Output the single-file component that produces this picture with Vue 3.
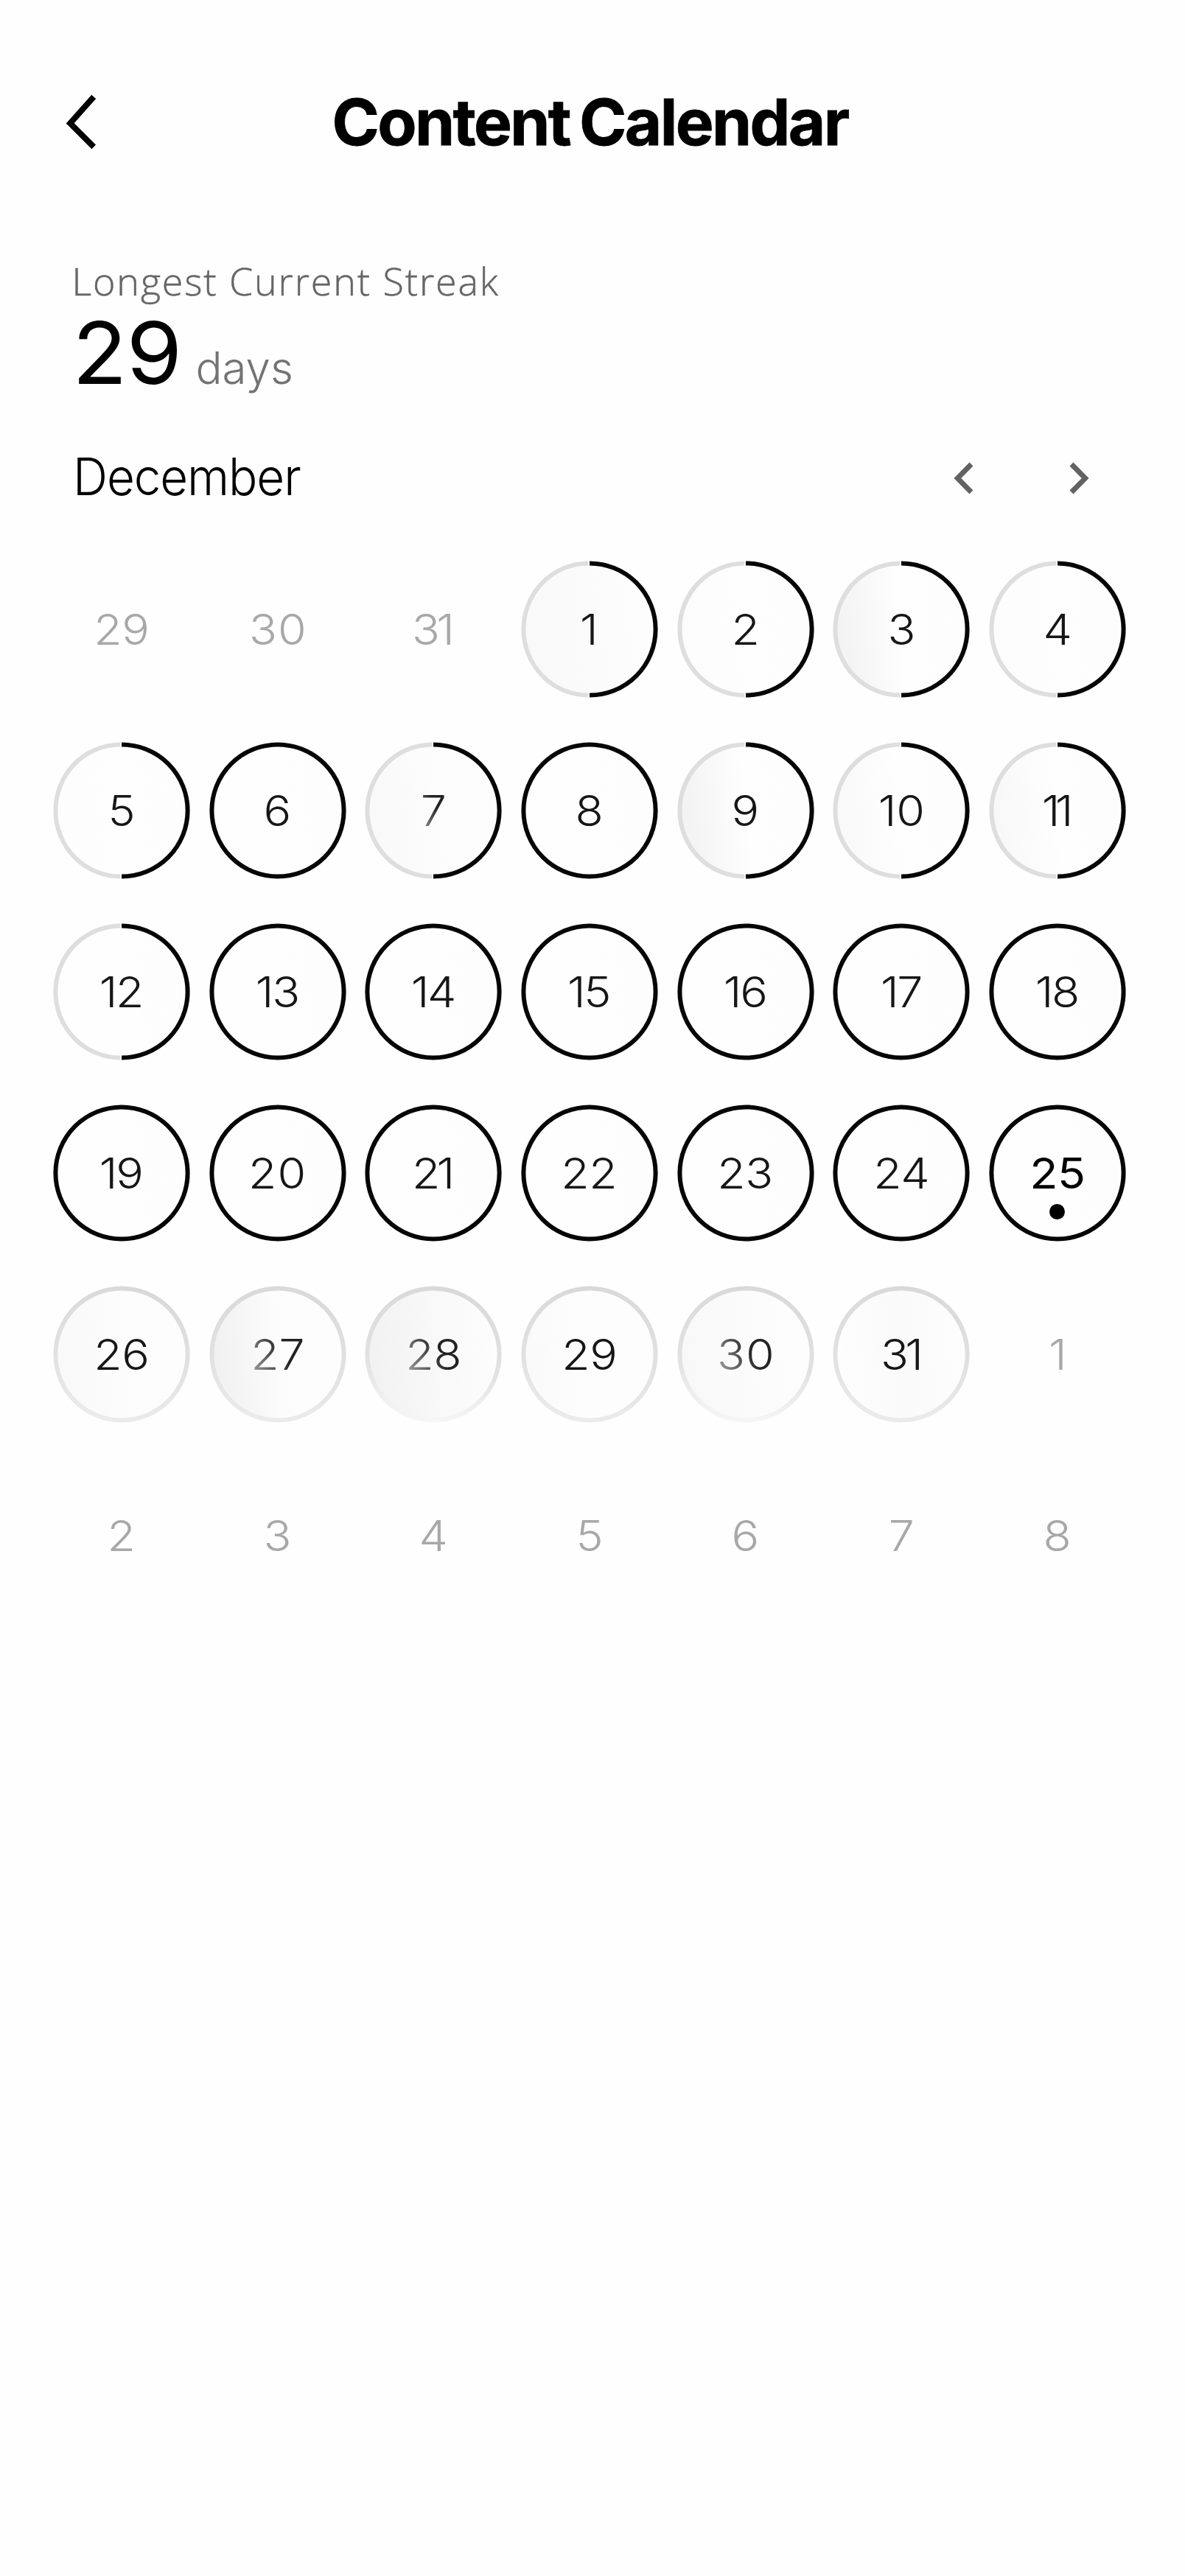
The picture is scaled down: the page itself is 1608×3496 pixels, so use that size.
<script setup>
// Tracking for two-digit labels; the numeral 1 is set tighter than the rest.
const tracking = (n) => {
  const s = String(n)
  if (s.length < 2) return 0
  if (s === '11') return -6
  if (s[1] === '1') return -4.5
  if (s === '10') return 0
  if (s[0] === '1') return -2.2
  return s[1] === '0' ? 1 : -0.3
}

// Tint at the left edge and in the middle of each disc.
const tints = {
  1: ['#f9f9f9', '#fbfbfb'],
  2: ['#fcfcfc', '#fefefe'],
  3: ['#f3f3f3', '#fefefe'],
  4: ['#fcfcfc', '#fefefe'],
  5: ['#fdfdfd', '#fefefe'],
  7: ['#f9f9f9', '#fcfcfc'],
  9: ['#f3f3f3', '#fefefe'],
  10: ['#f9f9f9', '#fefefe'],
  11: ['#f8f8f8', '#fefefe'],
  26: ['#f9f9f9', '#fcfcfc'],
  27: ['#f1f1f1', '#fcfcfc'],
  28: ['#f2f2f2', '#f8f8f8'],
  29: ['#fafafa', '#fdfdfd'],
  30: ['#f8f8f8', '#fbfbfb'],
  31: ['#fdfdfd', '#fafafa'],
}

const half = [1, 2, 3, 4, 5, 7, 9, 10, 11, 12]
const faded = [7, 27, 28, 30]

const days = []
const add = (n, state) =>
  days.push({
    id: state + n,
    n,
    state,
    tint: tints[n] || ['#fefefe', '#fefefe'],
    gap: tracking(n),
    faded: state !== 'out' && faded.includes(n),
    today: state !== 'out' && n === 25,
  })

for (const n of [29, 30, 31]) add(n, 'out')
for (let n = 1; n <= 31; n++) {
  add(n, n > 25 ? 'empty' : half.includes(n) ? 'half' : 'full')
}
for (let n = 1; n <= 8; n++) add(n, 'out')
</script>

<template>
  <main class="screen">
    <header class="header">
      <svg class="back" viewBox="0 0 50 80" width="50" height="80">
        <path d="M40.2 6.3 8.2 42.3 40.2 74.3" />
      </svg>
      <h1>Content Calendar</h1>
    </header>

    <section class="streak">
      <p class="label">Longest Current Streak</p>
      <p class="value"><b>29</b><span>days</span></p>
    </section>

    <section class="month">
      <h2>December</h2>
      <nav>
        <svg viewBox="0 0 40 50" width="40" height="50"><path d="M29 6 10.3 25 29 44" /></svg>
        <svg viewBox="0 0 40 50" width="40" height="50"><path d="M11 6 29.7 25 11 44" /></svg>
      </nav>
    </section>

    <section class="grid">
      <div v-for="d in days" :key="d.id" class="day" :class="[d.state, { today: d.today, faded: d.faded }]">
        <svg v-if="d.state !== 'out'" class="ring" viewBox="0 0 186 186" width="186" height="186">
          <defs>
            <linearGradient :id="'t' + d.n" x1="0" y1="0.55" x2="1" y2="0.45">
              <stop offset="0.05" :stop-color="d.tint[0]" />
              <stop offset="0.5" :stop-color="d.tint[1]" />
              <stop offset="1" stop-color="#fdfdfd" />
            </linearGradient>
            <linearGradient :id="'r' + d.n" x1="0.55" y1="0" x2="0.45" y2="1">
              <stop offset="0" stop-color="#d9d9d9" />
              <stop offset="0.6" stop-color="#e2e2e2" />
              <stop offset="1" :stop-color="d.n === 28 || d.n === 30 ? '#f6f6f6' : '#ebebeb'" />
            </linearGradient>
          </defs>
          <circle cx="93" cy="93" r="89.6" :fill="`url(#t${d.n})`" />
          <circle v-if="d.state === 'full'" class="dark" cx="93" cy="93" r="89.6" />
          <circle v-if="d.state === 'empty'" class="light" cx="93" cy="93" r="89.6" :stroke="`url(#r${d.n})`" />
          <template v-if="d.state === 'half'">
            <path class="light" d="M91.5 3.4A88.1 89.6 0 0 0 91.5 182.6" stroke="#dedede" />
            <path class="dark" d="M93 3.4A89.6 89.6 0 0 1 93 182.6" />
          </template>
        </svg>
        <span class="num" :style="{ letterSpacing: d.gap + 'px', marginRight: -d.gap + 'px' }">{{ d.n }}</span>
        <i v-if="d.today" class="dot"></i>
      </div>
    </section>
  </main>
</template>

<style>
body {
  background: #fefefe;
}
</style>

<style scoped>
.screen {
  box-sizing: border-box;
  width: 1608px;
  height: 3496px;
  padding-top: 104px;
  background: #fefefe;
  font-family: Inter, "Liberation Sans", sans-serif;
  color: #000;
  overflow: hidden;
}
h1,
h2,
p {
  margin: 0;
  font-weight: inherit;
}
svg {
  display: block;
  fill: none;
}
.header {
  display: grid;
  grid-template-columns: 140px 1fr 147px;
  align-items: center;
  height: 124px;
}
.back {
  margin-left: 87px;
  margin-top: -3px;
}
.back path {
  stroke: #000;
  stroke-width: 8;
}
h1 {
  font-size: 87px;
  line-height: 124px;
  font-weight: 700;
  letter-spacing: -2.6px;
  word-spacing: -5px;
  text-align: center;
  white-space: nowrap;
  -webkit-text-stroke: 0.8px #000;
}
.streak {
  padding: 121px 0 0 97.5px;
}
.label {
  font-family: "Open Sans", "Noto Sans", sans-serif;
  font-weight: 300;
  font-size: 52px;
  line-height: 64px;
  letter-spacing: 1.86px;
  color: #666;
  -webkit-text-stroke: 0.5px #666;
}
.value {
  display: flex;
  align-items: baseline;
  gap: 26px;
  height: 132px;
  line-height: 132px;
}
.value b {
  font-weight: 400;
  font-size: 117px;
  letter-spacing: -1px;
  transform: scaleX(1.045);
  transform-origin: left;
}
.value span {
  font-weight: 300;
  font-size: 60px;
  color: #737373;
}
.month {
  display: flex;
  align-items: center;
  justify-content: space-between;
  height: 100px;
  margin-top: 51.5px;
  padding: 0 125px 0 98.5px;
}
h2 {
  font-size: 70px;
  font-weight: 300;
  line-height: 100px;
  letter-spacing: -1.2px;
  transform: scaleX(0.935);
  transform-origin: left;
}
nav {
  display: flex;
  gap: 114px;
  margin-top: 5px;
}
nav path {
  stroke: #636363;
  stroke-width: 7;
}
.grid {
  display: grid;
  grid-template-columns: repeat(7, 211.7px);
  grid-auto-rows: 246.1px;
  margin: 34px 0 0 59px;
}
.day {
  display: grid;
  place-items: center;
  position: relative;
}
.ring,
.num {
  grid-area: 1 / 1;
}
.ring circle,
.ring path {
  stroke-width: 6;
}
.dark {
  stroke: #060606;
}
.num {
  font-size: 58px;
  line-height: 70px;
  font-weight: 300;
  color: #161616;
  z-index: 1;
  transform: scaleX(1.08);
}
.out .num {
  color: #a8a8a8;
}
.today .num {
  font-weight: 400;
  color: #000;
}
.faded .num {
  color: transparent;
  background: linear-gradient(65deg, #999 10%, #222 60%);
  -webkit-background-clip: text;
  background-clip: text;
}
.dot {
  position: absolute;
  left: calc(50% - 10.5px);
  top: calc(50% + 42px);
  width: 21px;
  height: 21px;
  border-radius: 50%;
  background: #000;
}
</style>
